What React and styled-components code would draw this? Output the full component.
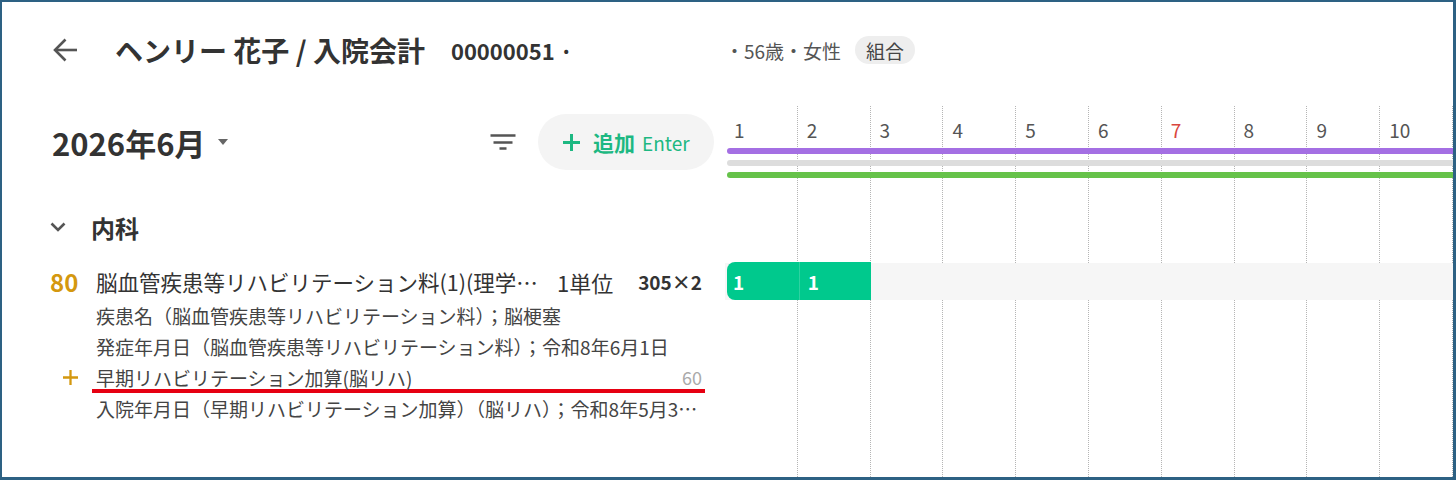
import React from "react";
import styled, { createGlobalStyle } from "styled-components";

const GlobalStyle = createGlobalStyle`
  html, body { margin: 0; padding: 0; background: #fff; }
  body {
    font-family: "Noto Sans CJK JP", "Noto Sans", sans-serif;
    color: #333;
  }
  *, *::before, *::after { box-sizing: border-box; }
`;

const DAYS = [1, 2, 3, 4, 5, 6, 7, 8, 9, 10];
const HOLIDAYS = [7];

const Frame = styled.div`
  width: 1456px;
  height: 480px;
  border: solid #2d6183;
  border-width: 2px 3px 3px 2px;
  display: grid;
  grid-template-columns: 723px 1fr;
  grid-template-rows: 104px 1fr;
  overflow: hidden;
  background: #fff;
`;

/* ---- header ---- */
const HeaderMain = styled.header`
  display: flex;
  align-items: center;
  padding: 0 0 8px 50px;
  white-space: nowrap;
`;

const IconButton = styled.button`
  display: flex;
  align-items: center;
  justify-content: center;
  border: 0;
  background: none;
  padding: 0;
  color: #555;
  cursor: pointer;
`;

const Title = styled.h1`
  margin: 0 0 0 37px;
  font-size: 28px;
  font-weight: 700;
  line-height: 1;
  color: #333;
`;

const PatientId = styled.span`
  margin-left: 26px;
  font-size: 22px;
  font-weight: 700;
  color: #333;
`;

const HeaderInfo = styled.div`
  display: flex;
  align-items: center;
  padding-bottom: 8px;
  font-size: 19px;
  color: #555;
  white-space: nowrap;
`;

const Chip = styled.span`
  display: inline-flex;
  align-items: center;
  height: 28px;
  margin-left: 14px;
  padding: 0 11px;
  border-radius: 14px;
  background: #eeeeee;
  color: #444;
`;

/* ---- left list ---- */
const Sidebar = styled.section`
  display: flex;
  flex-direction: column;
  padding: 0 23px 0 48px;
  min-width: 0;
`;

const Toolbar = styled.div`
  display: flex;
  align-items: center;
  height: 72px;
  padding-left: 2px;
  margin-right: -12px;
`;

const MonthPicker = styled.button`
  display: flex;
  align-items: center;
  gap: 13px;
  border: 0;
  background: none;
  padding: 0;
  font-family: inherit;
  font-size: 31px;
  font-weight: 700;
  color: #333;
`;

const Caret = styled.span`
  width: 0;
  height: 0;
  border-left: 5px solid transparent;
  border-right: 5px solid transparent;
  border-top: 6px solid #666;
`;

const FilterButton = styled(IconButton)`
  margin-left: auto;
`;

const AddButton = styled.button`
  display: flex;
  align-items: center;
  width: 176px;
  height: 56px;
  margin-left: 22px;
  padding: 0 0 0 25px;
  border: 0;
  border-radius: 28px;
  background: #f4f4f4;
  color: #1db882;
  font-family: inherit;
`;

const AddLabel = styled.span`
  margin-left: 13px;
  font-size: 21px;
  font-weight: 700;
`;

const Shortcut = styled.span`
  margin-left: 7px;
  font-size: 19px;
`;

const SectionHeader = styled.div`
  display: flex;
  align-items: center;
  gap: 25px;
  height: 40px;
  margin-top: 29px;
  font-size: 24px;
  font-weight: 700;
  color: #333;
`;

const ItemRow = styled.div`
  display: grid;
  grid-template-columns: 46px minmax(0, 1fr) auto auto;
  align-items: center;
  height: 37px;
  margin-top: 16px;
  white-space: nowrap;
`;

const Points = styled.span`
  font-size: 24px;
  font-weight: 700;
  color: #d4980f;
`;

const ItemName = styled.span`
  font-size: 21.5px;
  color: #333;
  overflow: hidden;
  text-overflow: ellipsis;
`;

const Unit = styled.span`
  margin-left: 12px;
  font-size: 22px;
  color: #333;
`;

const Price = styled.span`
  margin-left: 25px;
  font-size: 19px;
  font-weight: 700;
  color: #333;
`;

const DetailRow = styled.div`
  display: grid;
  grid-template-columns: 46px minmax(0, 1fr);
  align-items: center;
  line-height: 31px;
  font-size: 19px;
  color: #444;
  white-space: nowrap;
`;

const Marker = styled.span`
  display: flex;
  justify-content: flex-end;
  padding-right: 18px;
  color: #d4980f;
`;

const DetailText = styled.span`
  display: flex;
  justify-content: space-between;
  min-width: 0;
  overflow: hidden;
  ${(p) =>
    p.$marked &&
    `
    margin: 0 -3px 0 -4px;
    padding: 0 3px 0 4px;
    background: linear-gradient(#e60012, #e60012) left bottom / 100% 4px no-repeat;
  `}
`;

const Ellipsis = styled.span`
  overflow: hidden;
  text-overflow: ellipsis;
`;

const Muted = styled.span`
  font-size: 18px;
  color: #aaa;
`;

/* ---- timeline ---- */
const Timeline = styled.section`
  display: grid;
  overflow: hidden;
  & > * {
    grid-area: 1 / 1;
  }
`;

const DayGrid = styled.div`
  display: grid;
  grid-template-columns: repeat(10, 1fr);
`;

const DayColumn = styled.div`
  border-right: 1px dotted #b5b5b5;
  padding: 12px 0 0 9px;
`;

const DayLabel = styled.span`
  display: block;
  font-size: 19px;
  line-height: 24px;
  color: ${(p) => (p.$holiday ? "#d9463e" : "#555")};
`;

const Lanes = styled.div`
  display: flex;
  flex-direction: column;
`;

const BarStack = styled.div`
  display: flex;
  flex-direction: column;
  gap: 6px;
  padding-top: 42px;
`;

const Bar = styled.div`
  height: 6px;
  margin: 0 -10px 0 2px;
  border-radius: 3px;
  background: ${(p) => p.$color};
`;

const ScheduleRow = styled.div`
  display: grid;
  grid-template-columns: repeat(10, 1fr);
  height: 37px;
  margin-top: 85px;
  background: #f6f6f6;
`;

const Stay = styled.div`
  grid-column: ${(p) => `${p.$start} / span ${p.$span}`};
  display: grid;
  grid-template-columns: repeat(${(p) => p.$span}, 1fr);
  align-items: center;
  margin: -1px 0 0 2px;
  border-radius: 8px 0 0 8px;
  background: #00c98d;
  color: #fff;
  font-size: 19px;
  font-weight: 700;
`;

const StayCount = styled.span`
  height: 100%;
  display: flex;
  align-items: center;
  padding-left: 6px;
  & + & {
    border-left: 1px solid rgba(255, 255, 255, 0.18);
    padding-left: 8px;
  }
`;

const BackIcon = () => (
  <svg width="26" height="26" viewBox="0 0 26 26" fill="none" stroke="currentColor" strokeWidth="2.6">
    <path d="M25 13H3" />
    <path d="M13.5 2.5L3 13l10.5 10.5" />
  </svg>
);

const FilterIcon = () => (
  <svg width="26" height="16" viewBox="0 0 26 16" fill="none" stroke="currentColor" strokeWidth="2.4">
    <path d="M0.5 1.5h25M3.5 8.5h19M9.5 14.5h7" />
  </svg>
);

const PlusIcon = ({ size = 17, weight = 3 }) => (
  <svg width={size} height={size} viewBox="0 0 17 17" fill="none" stroke="currentColor" strokeWidth={weight}>
    <path d="M8.5 0v17M0 8.5h17" />
  </svg>
);

const ChevronDown = () => (
  <svg width="16" height="10" viewBox="0 0 16 10" fill="none" stroke="#555" strokeWidth="2.6">
    <path d="M1.5 1.5L8 8l6.5-6.5" />
  </svg>
);

const details = [
  { text: "疾患名（脳血管疾患等リハビリテーション料）；脳梗塞" },
  { text: "発症年月日（脳血管疾患等リハビリテーション料）；令和8年6月1日" },
  { text: "早期リハビリテーション加算(脳リハ)", added: true, points: 60 },
  { text: "入院年月日（早期リハビリテーション加算）（脳リハ）；令和8年5月31日" },
];

export default function App() {
  return (
    <>
      <GlobalStyle />
      <Frame>
        <HeaderMain>
          <IconButton aria-label="戻る">
            <BackIcon />
          </IconButton>
          <Title>ヘンリー 花子 / 入院会計</Title>
          <PatientId>00000051 ·</PatientId>
        </HeaderMain>
        <HeaderInfo>
          ・56歳・女性
          <Chip>組合</Chip>
        </HeaderInfo>

        <Sidebar>
          <Toolbar>
            <MonthPicker>
              2026年6月
              <Caret />
            </MonthPicker>
            <FilterButton aria-label="絞り込み">
              <FilterIcon />
            </FilterButton>
            <AddButton>
              <PlusIcon />
              <AddLabel>追加</AddLabel>
              <Shortcut>Enter</Shortcut>
            </AddButton>
          </Toolbar>

          <SectionHeader>
            <ChevronDown />
            内科
          </SectionHeader>

          <ItemRow>
            <Points>80</Points>
            <ItemName>脳血管疾患等リハビリテーション料(1)(理学療法士による場合)</ItemName>
            <Unit>1単位</Unit>
            <Price>305×2</Price>
          </ItemRow>

          {details.map((d) => (
            <DetailRow key={d.text}>
              <Marker>{d.added && <PlusIcon size={15} weight={2.6} />}</Marker>
              <DetailText $marked={d.added}>
                <Ellipsis>{d.text}</Ellipsis>
                {d.points && <Muted>{d.points}</Muted>}
              </DetailText>
            </DetailRow>
          ))}
        </Sidebar>

        <Timeline>
          <DayGrid>
            {DAYS.map((day) => (
              <DayColumn key={day}>
                <DayLabel $holiday={HOLIDAYS.includes(day)}>{day}</DayLabel>
              </DayColumn>
            ))}
          </DayGrid>
          <Lanes>
            <BarStack>
              <Bar $color="#a46fe3" />
              <Bar $color="#dddddd" />
              <Bar $color="#66c24a" />
            </BarStack>
            <ScheduleRow>
              <Stay $start={1} $span={2}>
                <StayCount>1</StayCount>
                <StayCount>1</StayCount>
              </Stay>
            </ScheduleRow>
          </Lanes>
        </Timeline>
      </Frame>
    </>
  );
}
